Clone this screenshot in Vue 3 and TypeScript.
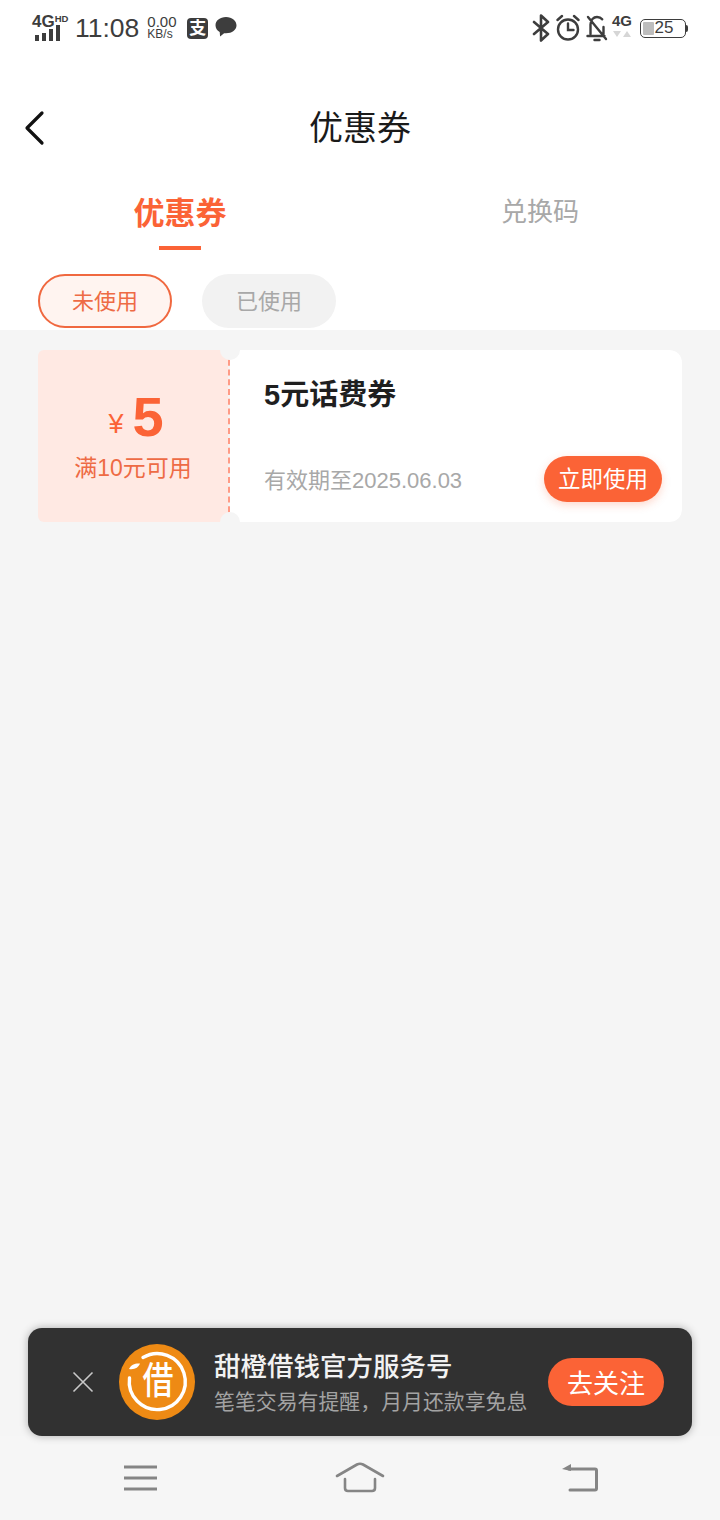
<template>
  <div class="page">
    <!-- Status bar -->
    <div class="status-bar">
      <div class="status-left">
        <div class="signal">
          <div class="signal-label">4G<span class="hd">HD</span></div>
          <div class="signal-bars">
            <i v-for="h in barHeights" :key="h" :style="{ height: h + 'px' }"></i>
          </div>
        </div>
        <span class="clock">11:08</span>
        <div class="speed">
          <span class="speed-num">0.00</span>
          <span class="speed-unit">KB/s</span>
        </div>
        <span class="alipay">支</span>
        <svg class="chat" width="22" height="20" viewBox="0 0 22 20">
          <path d="M11 0C4.900 0 .5 3.600 .5 8.300c0 2.900 1.600 5.300 4.200 6.800l.4 4.400 4-3.300c.6.100 1.300.1 1.900.1 6.100 0 10.500-3.500 10.500-8S17.100 0 11 0z" fill="#3d3d3d" />
        </svg>
      </div>
      <div class="status-right">
        <svg width="18" height="28" viewBox="0 0 18 28" fill="none" stroke="#3d3d3d" stroke-width="2.600" stroke-linejoin="round" stroke-linecap="round">
          <path d="M2 8l14 12-7 6.500V1.500L16 8 2 20" />
        </svg>
        <svg width="24" height="28" viewBox="0 0 24 28" fill="none" stroke="#3d3d3d" stroke-width="2.400" stroke-linecap="round">
          <circle cx="12" cy="15.500" r="10" />
          <path d="M12 9.500v6.500h5.500M1.500 6l4.500-4M22.500 6l-4.500-4" />
        </svg>
        <svg width="22" height="28" viewBox="0 0 22 28" fill="none" stroke="#3d3d3d" stroke-width="2.400" stroke-linecap="round" stroke-linejoin="round">
          <path d="M4.500 20V10.500C4.500 6 7.500 3 11 3c2.200 0 4 .8 5.200 2.300M17.500 13v7M1.500 22h17M8.500 26h5M2 3l18 22" />
        </svg>
        <div class="net">
          <span class="net-label">4G</span>
          <span class="net-arrows"><i class="down"></i><i class="up"></i></span>
        </div>
        <div class="battery">
          <div class="battery-body">
            <i class="battery-fill" :style="{ width: batteryFill + 'px' }"></i>
            <span class="battery-num">25</span>
          </div>
          <i class="battery-cap"></i>
        </div>
      </div>
    </div>

    <!-- Title bar -->
    <header class="title-bar">
      <svg class="back" width="24" height="36" viewBox="0 0 24 36" fill="none" stroke="#111" stroke-width="3.200" stroke-linecap="round" stroke-linejoin="round">
        <path d="M19 3L4 18l15 15" />
      </svg>
      <h1 class="title">优惠券</h1>
    </header>

    <!-- Tabs -->
    <nav class="tabs">
      <div class="tab active">优惠券</div>
      <div class="tab">兑换码</div>
    </nav>

    <div class="filters">
      <span class="pill on">未使用</span>
      <span class="pill">已使用</span>
    </div>

    <main class="content">
      <div class="coupon">
        <div class="coupon-stub">
          <div class="amount"><span class="yen">¥</span><span class="value">5</span></div>
          <div class="rule">满10元可用</div>
        </div>
        <div class="coupon-body">
          <div class="coupon-name">5元话费券</div>
          <div class="coupon-foot">
            <span class="expire">有效期至2025.06.03</span>
            <button class="use-btn">立即使用</button>
          </div>
        </div>
        <i class="notch top"></i>
        <i class="notch bottom"></i>
      </div>
    </main>

    <!-- Follow banner -->
    <div class="banner">
      <svg class="close" width="22" height="22" viewBox="0 0 22 22" stroke="#c9c9c9" stroke-width="1.600">
        <path d="M1.500 1.500l19 19M20.500 1.500l-19 19" />
      </svg>
      <div class="logo">
        <svg width="76" height="76" viewBox="0 0 76 76" fill="none">
          <circle cx="38" cy="38" r="38" fill="#ee8a14" />
          <path d="M24 13.500A28 28 0 1 1 10.500 34" stroke="#fff" stroke-width="3.400" stroke-linecap="round" />
          <path d="M10 25c2-4.500 6.500-6 11-5.500-1.500 4-5.500 6.500-11 5.500z" fill="#fff" />
        </svg>
        <span class="logo-char">借</span>
      </div>
      <div class="banner-text">
        <div class="banner-title">甜橙借钱官方服务号</div>
        <div class="banner-sub">笔笔交易有提醒，月月还款享免息</div>
      </div>
      <button class="follow-btn">去关注</button>
    </div>

    <!-- Navigation bar -->
    <footer class="nav-bar">
      <svg width="36" height="30" viewBox="0 0 36 30" stroke="#858585" stroke-width="3">
        <path d="M2 4h33M2 15h33M2 26h33" />
      </svg>
      <svg width="50" height="34" viewBox="0 0 50 34" fill="none" stroke="#858585" stroke-width="2.600" stroke-linecap="round" stroke-linejoin="round">
        <path d="M2 15L22 3.500c2-1 4-1 6 0L48 15M10 18v9c0 2 1 3 3 3h24c2 0 3-1 3-3v-9" />
      </svg>
      <svg width="38" height="32" viewBox="0 0 38 32" fill="none" stroke="#858585" stroke-width="3" stroke-linecap="round">
        <path d="M8 7h26c.8 0 1.500.7 1.500 1.500v18c0 .8-.7 1.500-1.500 1.500H9" />
        <path d="M1 7l9-5v7z" fill="#858585" stroke="none" />
      </svg>
    </footer>
  </div>
</template>

<script setup lang="ts">
const barHeights: number[] = [6, 8, 12, 16]
const batteryFill = 11
</script>

<style>
body {
  background: #f5f5f5;
}
</style>

<style scoped>
.page {
  display: flex;
  flex-direction: column;
  height: 1520px;
  overflow: hidden;
  font-family: "Liberation Sans", "Noto Sans CJK SC", sans-serif;
  background: #fff;
}

/* Status bar */
.status-bar {
  display: flex;
  justify-content: space-between;
  align-items: center;
  height: 58px;
  padding: 0 32px 2px 32px;
  color: #3d3d3d;
  box-sizing: border-box;
}

.status-left,
.status-right {
  display: flex;
  align-items: center;
}

.status-right {
  gap: 6px;
}

.signal {
  width: 34px;
  margin-right: 9px;
}

.signal-label {
  display: flex;
  font-size: 17px;
  line-height: 13px;
  font-weight: 700;
}

.hd {
  font-size: 9.500px;
  line-height: 7px;
}

.signal-bars {
  display: flex;
  align-items: flex-end;
  gap: 3px;
  height: 16px;
  margin-top: -3px;
  padding-left: 3px;
}

.signal-bars i {
  width: 4px;
  background: #3d3d3d;
}

.clock {
  font-size: 26.500px;
  line-height: 32px;
  margin-right: 8px;
}

.speed {
  display: flex;
  flex-direction: column;
  width: 32px;
  margin-right: 8px;
  line-height: 13px;
}

.speed-num {
  font-size: 15px;
}

.speed-unit {
  font-size: 12px;
}

.alipay {
  display: block;
  width: 21px;
  height: 21px;
  margin-right: 7px;
  border-radius: 4px;
  background: #3d3d3d;
  color: #fff;
  font-size: 17px;
  line-height: 21px;
  font-weight: 700;
  text-align: center;
}

.chat {
  margin-top: -2px;
}

.net {
  display: flex;
  flex-direction: column;
  align-items: center;
  width: 20px;
  margin-left: -2px;
  margin-top: -6px;
}

.net-label {
  font-size: 15px;
  line-height: 15px;
  font-weight: 700;
}

.net-arrows {
  display: flex;
  gap: 2px;
  margin-top: 3px;
}

.net-arrows i {
  width: 0;
  height: 0;
  border-left: 4px solid transparent;
  border-right: 4px solid transparent;
}

.net-arrows .down {
  border-top: 6px solid #d6d6d6;
}

.net-arrows .up {
  border-bottom: 6px solid #d6d6d6;
}

.battery {
  display: flex;
  align-items: center;
  margin-left: 2px;
}

.battery-body {
  display: flex;
  align-items: center;
  width: 46px;
  height: 19px;
  padding-left: 2px;
  border: 1.500px solid #3d3d3d;
  border-radius: 5px;
  box-sizing: border-box;
}

.battery-fill {
  height: 13px;
  border-radius: 1px;
  background: #bdbdbd;
}

.battery-num {
  font-size: 17px;
  line-height: 16px;
  margin-left: 0.5px;
}

.battery-cap {
  width: 2px;
  height: 7px;
  background: #3d3d3d;
  border-radius: 0 2px 2px 0;
}

/* Title bar */
.title-bar {
  position: relative;
  display: flex;
  justify-content: center;
  align-items: center;
  height: 70px;
  margin-top: 35px;
}

.back {
  position: absolute;
  left: 23px;
  top: 17px;
}

.title {
  margin: 0;
  color: #1a1a1a;
  font-size: 34px;
  font-weight: 400;
  line-height: 48px;
}

/* Tabs */
.tabs {
  display: grid;
  grid-template-columns: 1fr 1fr;
  height: 97px;
}

.tab {
  position: relative;
  padding-top: 25px;
  color: #a8a8a8;
  font-size: 26px;
  line-height: 48px;
  text-align: center;
}

.tab.active {
  padding-top: 26px;
  color: #fb6336;
  font-size: 31px;
  font-weight: 700;
  line-height: 50px;
}

.tab.active::after {
  content: "";
  position: absolute;
  left: 159px;
  top: 83px;
  width: 42px;
  height: 4px;
  background: #fb6336;
}

.filters {
  display: flex;
  gap: 30px;
  height: 54px;
  padding: 14px 38px 2px;
}

.pill {
  width: 134px;
  height: 54px;
  border: 2px solid transparent;
  border-radius: 27px;
  background: #f2f2f2;
  color: #a8a8a8;
  font-size: 22px;
  line-height: 52px;
  text-align: center;
  box-sizing: border-box;
}

.pill.on {
  border-color: #f0683f;
  background: #fff4f0;
  color: #ee6b45;
}

/* Coupon list */
.content {
  flex: 1;
  padding: 20px 38px 0;
  background: #f5f5f5;
}

.coupon {
  position: relative;
  display: flex;
  height: 172px;
  overflow: hidden;
}

.coupon-stub {
  display: flex;
  flex-direction: column;
  align-items: center;
  width: 190px;
  padding: 33px 0 0 0;
  border-radius: 6px 0 0 6px;
  background: #ffe9e3;
  box-sizing: border-box;
}

.amount {
  display: flex;
  align-items: baseline;
  height: 69px;
  padding-left: 6px;
  color: #fb6336;
}

.yen {
  font-size: 27px;
  margin-right: 9px;
  position: relative;
  top: -3px;
}

.value {
  font-size: 56px;
  font-weight: 700;
  line-height: 68px;
}

.rule {
  color: #ee6b45;
  font-size: 23px;
  line-height: 32px;
}

.coupon-body {
  display: flex;
  flex: 1;
  flex-direction: column;
  justify-content: space-between;
  padding: 27px 20px 20px 34px;
  border-left: 2px dashed #ff9a85;
  border-radius: 0 12px 12px 0;
  background: #fff;
  background-clip: padding-box;
}

.coupon-name {
  color: #1f1f1f;
  font-size: 29px;
  font-weight: 700;
  line-height: 36px;
}

.coupon-foot {
  display: flex;
  justify-content: space-between;
  align-items: flex-end;
}

.expire {
  color: #a8a8a8;
  font-size: 22px;
  line-height: 42px;
}

.use-btn {
  width: 118px;
  height: 46px;
  padding: 0 0 4px;
  border: none;
  border-radius: 23px;
  background: #fb6336;
  box-shadow: 0 3px 8px rgba(251, 99, 54, 0.25);
  color: #fff;
  font-family: inherit;
  font-size: 22.500px;
}

.notch {
  position: absolute;
  left: 182px;
  width: 20px;
  height: 20px;
  border-radius: 50%;
  background: #f5f5f5;
}

.notch.top {
  top: -10px;
}

.notch.bottom {
  bottom: -10px;
}

/* Follow banner */
.banner {
  display: flex;
  align-items: center;
  height: 108px;
  padding: 0 28px 0 44px;
  margin: -108px 28px 0;
  position: relative;
  border-radius: 14px;
  background: #313131;
  box-shadow: 0 0 8px rgba(0, 0, 0, 0.3);
  box-sizing: border-box;
}

.close {
  flex: none;
  margin-right: 25px;
}

.logo {
  position: relative;
  flex: none;
  width: 76px;
  height: 76px;
  margin-right: 19px;
}

.logo svg {
  display: block;
}

.logo-char {
  position: absolute;
  left: 16px;
  top: 15px;
  width: 46px;
  color: #fff;
  font-size: 31px;
  font-weight: 500;
  line-height: 46px;
  text-align: center;
  transform: scaleY(1.200);
}

.banner-text {
  flex: 1;
  min-width: 0;
  padding-top: 4px;
}

.banner-title {
  color: #f2f2f2;
  font-size: 26.500px;
  font-weight: 500;
  line-height: 36px;
}

.banner-sub {
  color: #a3a3a3;
  font-size: 20.900px;
  line-height: 34px;
}

.follow-btn {
  flex: none;
  width: 116px;
  height: 48px;
  padding: 0 0 2px;
  border: none;
  border-radius: 24px;
  background: #fb6336;
  color: #fff;
  font-family: inherit;
  font-size: 26px;
}

/* Navigation bar */
.nav-bar {
  display: grid;
  grid-template-columns: repeat(3, 1fr);
  justify-items: center;
  align-items: center;
  height: 84px;
  padding: 0 30px;
  background: #f6f6f6;
}
</style>
